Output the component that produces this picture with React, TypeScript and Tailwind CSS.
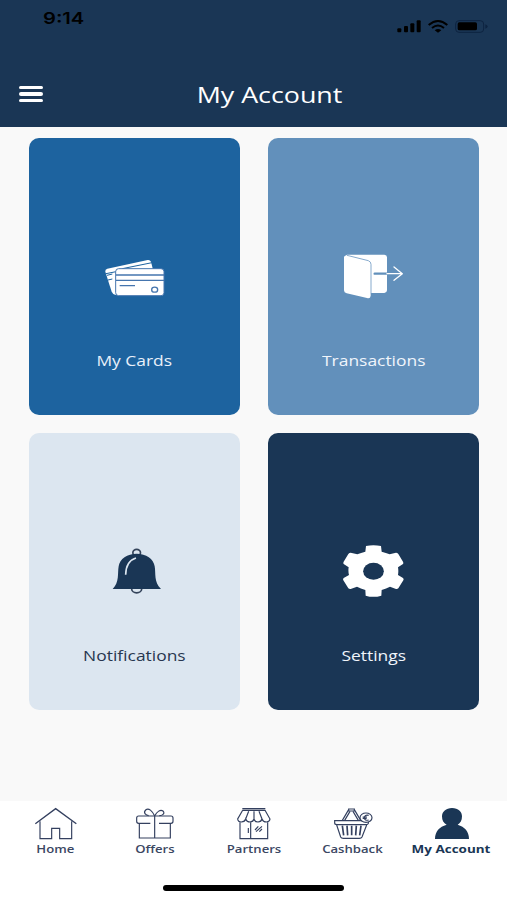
import type { ReactNode } from "react";
import clsx from "clsx";

interface TileProps {
  label: string;
  className: string;
  children: ReactNode;
}

interface Tab {
  label: string;
  icon: ReactNode;
  active?: boolean;
}

function StatusIcons() {
  return (
    <svg className="h-4 w-[94px]" viewBox="429 54 282 48" fill="#000">
      <rect x="433" y="85" width="12" height="12" rx="3" />
      <rect x="453" y="78" width="12" height="19" rx="3" />
      <rect x="472" y="70" width="12" height="27" rx="3" />
      <rect x="491" y="61" width="12" height="36" rx="3" />
      <g fill="none" stroke="#000" strokeWidth="6">
        <path d="M527 75Q555 51 583 75" />
        <path d="M537 84Q555 69 573 84" />
      </g>
      <path d="M545 91Q555 83 565 91L555 98Z" />
      <rect x="608" y="62" width="84" height="35" rx="10" fill="none" stroke="#0d2340" strokeWidth="3" />
      <rect x="614" y="67" width="58" height="24" rx="5" />
      <path d="M697 73Q704 75 704 79.500Q704 84 697 86Z" fill="#0d2340" />
    </svg>
  );
}

function CardsIcon() {
  return (
    <svg className="h-[55px] w-[71px]" viewBox="42 15 213 165">
      <path d="M67 71L188 45Q195 44 198 50L204 74L204 100L92 150Q83 148 80 140L61 80Q60 73 67 71Z" fill="#fff" />
      <g fill="none" stroke="#1d639f" strokeWidth="3">
        <path d="M63 86L98 79M112 71L201 53" />
        <path d="M66 91L82 87M69 105L82 102" />
      </g>
      <rect x="92" y="71" width="145" height="81" rx="9" fill="#fff" stroke="#4575ae" strokeWidth="3" />
      <path d="M93 90H237M93 106H237M104 122H150" stroke="#4575ae" strokeWidth="4" />
      <ellipse cx="209" cy="134" rx="9" ry="7.500" fill="none" stroke="#4575ae" strokeWidth="4" />
    </svg>
  );
}

function TransactionsIcon() {
  return (
    <svg className="h-[55px] w-[71px]" viewBox="39 30 213 165">
      <path d="M66 44H178Q186 45 186 52V151Q186 158 178 159H130V70L62 48Z" fill="#fff" />
      <path d="M57 52Q58 44 67 47L130 63Q137 65 137 73V167Q136 177 126 174L65 160Q57 158 57 151Z" fill="#fff" />
      <path d="M66 46L130 62Q138 65 138 73V160" fill="none" stroke="#86aacd" strokeWidth="3" />
      <path d="M149 101H186" stroke="#6290bb" strokeWidth="7" strokeLinecap="round" />
      <path d="M186 101H232M207 81L232 101L207 121" fill="none" stroke="#fff" strokeWidth="4" strokeLinecap="round" strokeLinejoin="round" />
    </svg>
  );
}

function BellIcon() {
  return (
    <svg className="h-[55px] w-[71px]" viewBox="12 30 213 165">
      <g fill="none" stroke="#34435a" strokeWidth="5">
        <ellipse cx="125" cy="53" rx="11.500" ry="10" />
        <ellipse cx="125" cy="162" rx="15" ry="11.500" />
      </g>
      <path d="M125 56C153 56 176 71 179 94C183 116 176 141 198 162H53C74 141 67 116 71 94C74 71 97 56 125 56Z" fill="#1a3655" />
      <path d="M123 69Q93 78 92 119" fill="none" stroke="#dce6f0" strokeWidth="5" />
    </svg>
  );
}

function GearIcon() {
  return (
    <svg className="h-[55px] w-[71px]" viewBox="24 30 213 165">
      <path
        d="M108 33Q130 28 153 33L155 50Q168 53 179 58L198 53Q202 53 205 57L219 80Q221 84 219 87L204 97Q206 108 204 120L219 129Q222 132 220 136L205 160Q202 163 198 162L180 155Q169 161 155 165L154 182Q130 189 107 182L106 165Q92 161 81 155L62 162Q58 163 55 160L40 136Q38 132 41 129L57 120Q54 108 56 97L41 87Q39 84 41 80L55 57Q58 53 62 53L82 58Q93 53 106 50Z"
        fill="#fff"
      />
      <ellipse cx="130.500" cy="108.500" rx="31" ry="25.500" fill="#1a3655" />
    </svg>
  );
}

const lineIcon = "h-9 w-[51px] fill-none stroke-[#34405f] stroke-[3.5]";

const tabs: Tab[] = [
  {
    label: "Home",
    icon: (
      <svg className={lineIcon} viewBox="30 30 153 108">
        <path d="M46 86L107 41L169 86" strokeWidth="4" />
        <path d="M60 79V131H95V100H119V131H155V79" />
      </svg>
    ),
  },
  {
    label: "Offers",
    icon: (
      <svg className={lineIcon} viewBox="327 30 153 108">
        <path d="M391 85H356Q350 85 350 79V69Q350 63 356 63H453Q459 63 459 69V79Q459 85 453 85H417" />
        <path d="M358 86V129H451V86M404 63V129" />
        <path d="M404 63C397 48 386 37 377 45C368 54 379 61 386 62M404 63C411 50 421 42 429 48C437 56 425 62 418 62" />
      </svg>
    ),
  },
  {
    label: "Partners",
    icon: (
      <svg className={lineIcon} viewBox="54 30 153 108">
        <path d="M97 41H166M97 46H166" />
        <path d="M98 46L83 72Q84 81 94 81Q105 80 107 72Q110 81 120 81Q130 80 132 72Q134 81 144 81Q154 80 156 72Q159 81 169 81Q179 80 180 72L165 46M116 49L107 72M132 49V72M147 49L156 72" />
        <path d="M90 82V131H173V82M122 82V131M115 99V114" />
        <path d="M135 105L145 94M138 110L156 94M148 110L156 102" />
      </svg>
    ),
  },
  {
    label: "Cashback",
    icon: (
      <svg className={lineIcon} viewBox="351 30 153 108">
        <path d="M374 77H475V85Q474 89 468 89H381Q374 89 374 84Z" />
        <path d="M380 90L392 126Q394 130 400 130H448Q454 130 456 126L470 90" />
        <path d="M397 92L401 121M411 92L413 121M425 92V121M439 92L437 121M453 92L449 121" className="stroke-5" />
        <path d="M397 76L416 44M452 76L433 44M404 76L420 49M445 76L429 49" />
        <path d="M416 42H433V48H416Z" />
        <ellipse cx="468" cy="68" rx="18" ry="14" fill="#fff" />
        <path d="M476 61Q464 58 463 68Q464 78 476 75M458 66H471M458 70H470" />
      </svg>
    ),
  },
  {
    label: "My Account",
    active: true,
    icon: (
      <svg className="h-9 w-[51px] fill-[#1a3655]" viewBox="138 30 153 108">
        <path d="M216 39C235 39 246 50 246 64C246 77 241 84 233 89C254 95 267 109 267 132H165C165 109 178 95 200 89C191 84 186 77 186 64C186 50 198 39 216 39Z" />
      </svg>
    ),
  },
];

function Tile({ label, className, children }: TileProps) {
  return (
    <button className={clsx("flex h-[277px] flex-col items-center rounded-[10px] pt-28", className)}>
      {children}
      <span className="mt-[46px] scale-x-[1.21] text-[14.400px] leading-5">{label}</span>
    </button>
  );
}

export default function App() {
  return (
    <div className="flex h-[900px] w-[507px] flex-col overflow-hidden bg-[#f9f9f9] font-['Open_Sans',sans-serif]">
      <header className="h-[127px] bg-[#1a3655]">
        <div className="flex items-start justify-between pr-[17px] pl-[43px]">
          <span className="mt-2 origin-left scale-x-[1.26] font-['Inter',sans-serif] text-[16px] leading-5 font-semibold text-black">
            9:14
          </span>
          <div className="mt-[18px]">
            <StatusIcons />
          </div>
        </div>
        <div className="mt-[43px] grid grid-cols-[50px_1fr_18px] items-center">
          <button className="ml-[19px] flex w-6 flex-col gap-[3px]" aria-label="Menu">
            <span className="h-[3.500px] rounded-sm bg-white" />
            <span className="h-[3.500px] rounded-sm bg-white" />
            <span className="h-[3.500px] rounded-sm bg-white" />
          </button>
          <h1 className="scale-x-[1.23] pt-0.5 text-center text-[21.800px] leading-8 text-white">My Account</h1>
        </div>
      </header>

      <main className="grid flex-1 grid-cols-[211px_211px] content-start gap-x-7 gap-y-[18px] pt-[11px] pl-[29px]">
        <Tile label="My Cards" className="bg-[#1d639f] text-[#e8f0fa]">
          <CardsIcon />
        </Tile>
        <Tile label="Transactions" className="bg-[#6290bb] text-[#f0f5fb]">
          <TransactionsIcon />
        </Tile>
        <Tile label="Notifications" className="bg-[#dce6f0] text-[#27364f]">
          <BellIcon />
        </Tile>
        <Tile label="Settings" className="bg-[#1a3655] text-[#f0f5fb]">
          <GearIcon />
        </Tile>
      </main>

      <footer className="flex h-[99px] flex-col items-center bg-white px-1.5">
        <nav className="grid w-full grid-cols-5 pt-1">
          {tabs.map((tab) => (
            <a key={tab.label} className="flex flex-col items-center">
              {tab.icon}
              <span
                className={clsx(
                  "text-[10.600px] leading-4 whitespace-nowrap",
                  tab.active
                    ? "scale-x-[1.27] font-bold text-[#1a3655]"
                    : "scale-x-[1.24] font-semibold text-[#3b4763]",
                )}
              >
                {tab.label}
              </span>
            </a>
          ))}
        </nav>
        <div className="mt-[28px] h-[5.500px] w-[181px] rounded-full bg-black" />
      </footer>
    </div>
  );
}
